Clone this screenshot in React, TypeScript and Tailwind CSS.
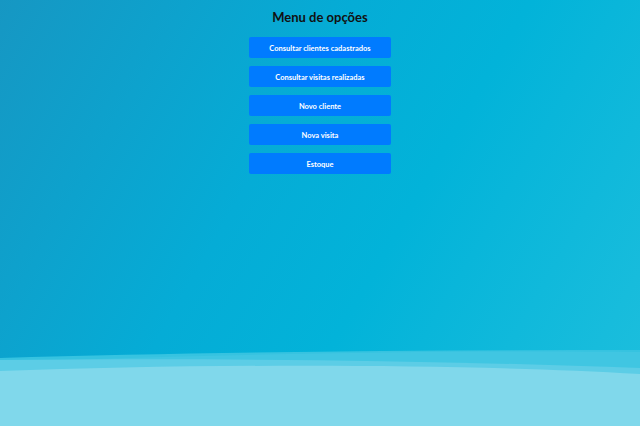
const options = [
  "Consultar clientes cadastrados",
  "Consultar visitas realizadas",
  "Novo cliente",
  "Nova visita",
  "Estoque",
];

const App = () => {
  return (
    <div className="relative h-[426px] w-[640px] overflow-hidden bg-[linear-gradient(120deg,#1697c3_0%,#05acd6_40%,#02b3d9_60%,#1ebfdd_100%)] font-['Lato',sans-serif]">
      {/* waves */}
      <svg className="absolute bottom-0 left-0" width="640" height="80" viewBox="0 0 640 80">
        <path d="M0 12 C200 6 420 4 640 4 L640 80 L0 80 Z" fill="#36c3e0" />
        <path d="M0 16 C220 8 450 4 640 6 L640 80 L0 80 Z" fill="#40c6e2" />
        <path d="M0 14 C220 12 420 14 640 22 L640 80 L0 80 Z" fill="#5ccde6" />
        <path d="M0 25 C200 18 450 17 640 28 L640 80 L0 80 Z" fill="#80d8eb" />
      </svg>

      <div className="relative flex flex-col items-center pt-[9px]">
        <h1 className="text-[13px] font-bold leading-[17px] text-[#111]">Menu de opções</h1>
        <div className="mt-[11px] flex flex-col gap-2">
          {options.map((o) => (
            <button
              key={o}
              className="h-[21px] w-[142px] rounded-[2px] bg-[#007bff] pt-[2px] text-[7.5px] font-bold text-white"
            >
              {o}
            </button>
          ))}
        </div>
      </div>
    </div>
  );
};

export default App;
